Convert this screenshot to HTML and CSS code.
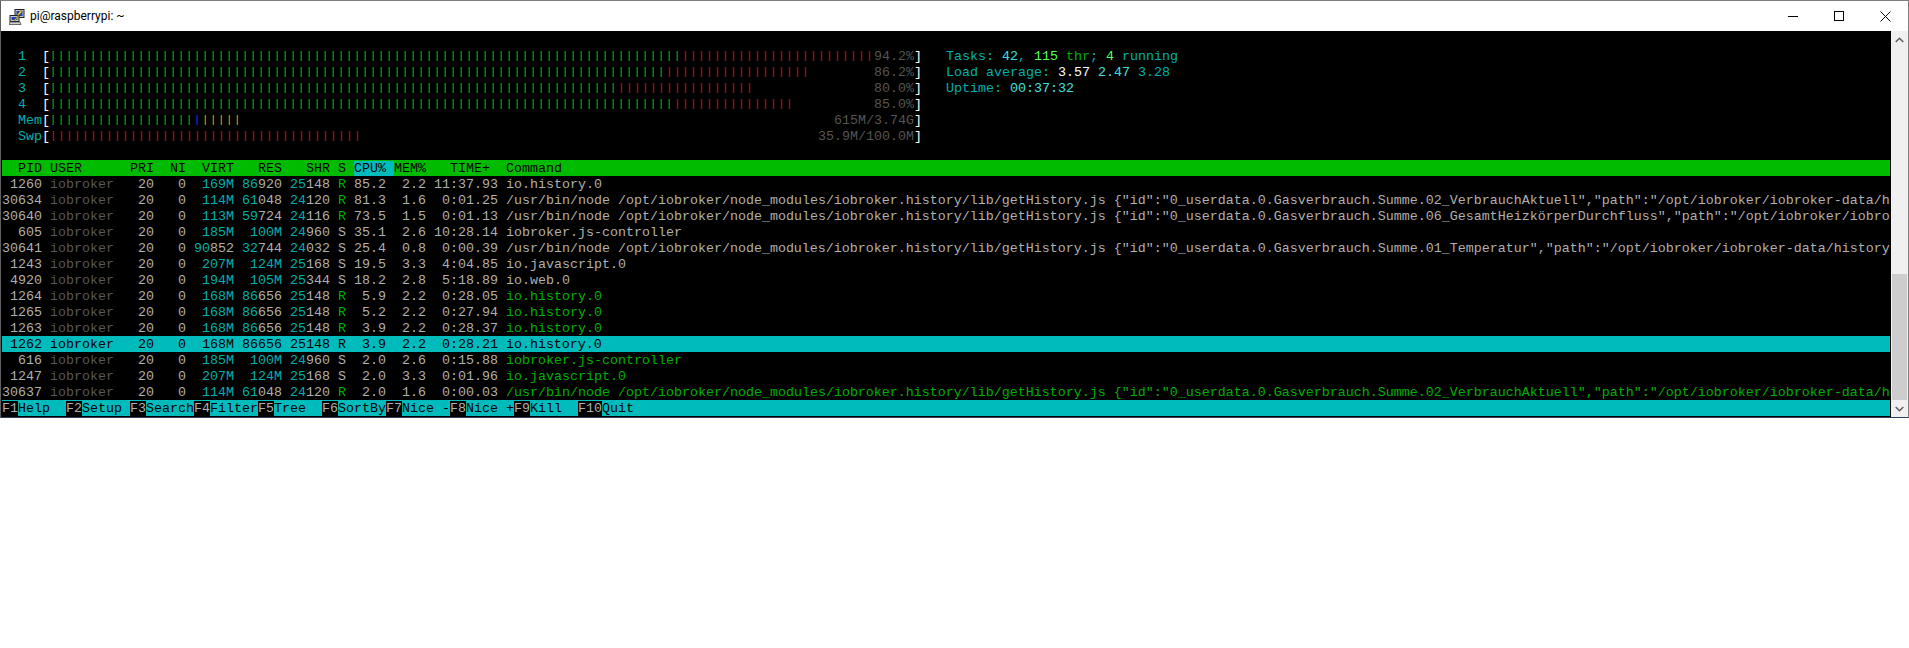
FILE: index.html
```html
<!DOCTYPE html>
<html lang="en">
<head>
<meta charset="utf-8">
<title>pi@raspberrypi: ~</title>
<link rel="stylesheet" href="styles.css">
</head>
<body>
<div class="window">
  <header class="titlebar">
    <svg class="app-icon" width="16" height="16" viewBox="0 0 16 16">
      <rect x="6" y="0.5" width="9" height="8" fill="#c8c8d8" stroke="#222"/>
      <rect x="7.5" y="2" width="6" height="5" fill="#2040c0"/>
      <rect x="1" y="6.5" width="9" height="6" fill="#c8c8d8" stroke="#222"/>
      <rect x="2.5" y="8" width="6" height="3" fill="#2040c0"/>
      <path d="M1 13h10l1 2.500H0z" fill="#d0d0d0" stroke="#333" stroke-width="0.700"/>
      <path d="M12 1 8 6l2 .5L5 11l1 .5L10 8 8.500 7.500 13 3z" fill="#f4e020" stroke="#705000" stroke-width="0.500"/>
    </svg>
    <span class="title">pi@raspberrypi: ~</span>
    <div class="controls">
      <div class="ctl"><svg width="10" height="10" viewBox="0 0 10 10"><path d="M0 5.500h10" stroke="#000"/></svg></div>
      <div class="ctl"><svg width="10" height="10" viewBox="0 0 10 10"><rect x="0.500" y="0.500" width="9" height="9" fill="none" stroke="#000"/></svg></div>
      <div class="ctl"><svg width="11" height="11" viewBox="0 0 11 11"><path d="M.5.500l10 10M10.500.500l-10 10" stroke="#000" fill="none"/></svg></div>
    </div>
  </header>
  <div class="content">
    <main class="term">
<div class="row"> </div>
<div class="row"><span class="c">  1  </span><span class="w">[</span><span class="bar g">|||||||||||||||||||||||||||||||||||||||||||||||||||||||||||||||||||||||||||||||</span><span class="bar r">||||||||||||||||||||||||</span><span class="d">94.2%</span><span class="w">]</span>   <span class="c">Tasks: </span><span class="bc">42</span><span class="c">, </span><span class="bg">115</span><span class="g"> thr</span><span class="c">; </span><span class="bg">4</span><span class="c"> running</span></div>
<div class="row"><span class="c">  2  </span><span class="w">[</span><span class="bar g">|||||||||||||||||||||||||||||||||||||||||||||||||||||||||||||||||||||||||||||</span><span class="bar r">||||||||||||||||||</span>        <span class="d">86.2%</span><span class="w">]</span>   <span class="c">Load average: </span><span class="w">3.57 </span><span class="bc">2.47 </span><span class="c">3.28</span></div>
<div class="row"><span class="c">  3  </span><span class="w">[</span><span class="bar g">|||||||||||||||||||||||||||||||||||||||||||||||||||||||||||||||||||||||</span><span class="bar r">|||||||||||||||||</span>               <span class="d">80.0%</span><span class="w">]</span>   <span class="c">Uptime: </span><span class="bc">00:37:32</span></div>
<div class="row"><span class="c">  4  </span><span class="w">[</span><span class="bar g">||||||||||||||||||||||||||||||||||||||||||||||||||||||||||||||||||||||||||||||</span><span class="bar r">|||||||||||||||</span>          <span class="d">85.0%</span><span class="w">]</span></div>
<div class="row"><span class="c">  Mem</span><span class="w">[</span><span class="bar g">||||||||||||||||||</span><span class="bar b">|</span><span class="bar y">|||||</span>                                                                          <span class="d">615M/3.74G</span><span class="w">]</span></div>
<div class="row"><span class="c">  Swp</span><span class="w">[</span><span class="bar r">|||||||||||||||||||||||||||||||||||||||</span>                                                         <span class="d">35.9M/100.0M</span><span class="w">]</span></div>
<div class="row"> </div>
<div class="row head">  PID USER      PRI  NI  VIRT   RES   SHR S <span class="sort">CPU% </span>MEM%   TIME+  Command</div>
<div class="row n"> 1260 <span class="d">iobroker</span>   20   0  <span class="c">169M</span> <span class="c">86</span>920 <span class="c">25</span>148 <span class="g">R</span> 85.2  2.2 11:37.93 io.history.0</div>
<div class="row n">30634 <span class="d">iobroker</span>   20   0  <span class="c">114M</span> <span class="c">61</span>048 <span class="c">24</span>120 <span class="g">R</span> 81.3  1.6  0:01.25 /usr/bin/node /opt/iobroker/node_modules/iobroker.history/lib/getHistory.js {"id":"0_userdata.0.Gasverbrauch.Summe.02_VerbrauchAktuell","path":"/opt/iobroker/iobroker-data/h</div>
<div class="row n">30640 <span class="d">iobroker</span>   20   0  <span class="c">113M</span> <span class="c">59</span>724 <span class="c">24</span>116 <span class="g">R</span> 73.5  1.5  0:01.13 /usr/bin/node /opt/iobroker/node_modules/iobroker.history/lib/getHistory.js {"id":"0_userdata.0.Gasverbrauch.Summe.06_GesamtHeizkörperDurchfluss","path":"/opt/iobroker/iobro</div>
<div class="row n">  605 <span class="d">iobroker</span>   20   0  <span class="c">185M</span>  <span class="c">100M</span> <span class="c">24</span>960 S 35.1  2.6 10:28.14 iobroker.js-controller</div>
<div class="row n">30641 <span class="d">iobroker</span>   20   0 <span class="c">90</span>852 <span class="c">32</span>744 <span class="c">24</span>032 S 25.4  0.8  0:00.39 /usr/bin/node /opt/iobroker/node_modules/iobroker.history/lib/getHistory.js {"id":"0_userdata.0.Gasverbrauch.Summe.01_Temperatur","path":"/opt/iobroker/iobroker-data/history</div>
<div class="row n"> 1243 <span class="d">iobroker</span>   20   0  <span class="c">207M</span>  <span class="c">124M</span> <span class="c">25</span>168 S 19.5  3.3  4:04.85 io.javascript.0</div>
<div class="row n"> 4920 <span class="d">iobroker</span>   20   0  <span class="c">194M</span>  <span class="c">105M</span> <span class="c">25</span>344 S 18.2  2.8  5:18.89 io.web.0</div>
<div class="row n"> 1264 <span class="d">iobroker</span>   20   0  <span class="c">168M</span> <span class="c">86</span>656 <span class="c">25</span>148 <span class="g">R</span>  5.9  2.2  0:28.05 <span class="g">io.history.0</span></div>
<div class="row n"> 1265 <span class="d">iobroker</span>   20   0  <span class="c">168M</span> <span class="c">86</span>656 <span class="c">25</span>148 <span class="g">R</span>  5.2  2.2  0:27.94 <span class="g">io.history.0</span></div>
<div class="row n"> 1263 <span class="d">iobroker</span>   20   0  <span class="c">168M</span> <span class="c">86</span>656 <span class="c">25</span>148 <span class="g">R</span>  3.9  2.2  0:28.37 <span class="g">io.history.0</span></div>
<div class="row sel"> 1262 iobroker   20   0  168M 86656 25148 R  3.9  2.2  0:28.21 io.history.0</div>
<div class="row n">  616 <span class="d">iobroker</span>   20   0  <span class="c">185M</span>  <span class="c">100M</span> <span class="c">24</span>960 S  2.0  2.6  0:15.88 <span class="g">iobroker.js-controller</span></div>
<div class="row n"> 1247 <span class="d">iobroker</span>   20   0  <span class="c">207M</span>  <span class="c">124M</span> <span class="c">25</span>168 S  2.0  3.3  0:01.96 <span class="g">io.javascript.0</span></div>
<div class="row n">30637 <span class="d">iobroker</span>   20   0  <span class="c">114M</span> <span class="c">61</span>048 <span class="c">24</span>120 <span class="g">R</span>  2.0  1.6  0:00.03 <span class="g">/usr/bin/node /opt/iobroker/node_modules/iobroker.history/lib/getHistory.js {"id":"0_userdata.0.Gasverbrauch.Summe.02_VerbrauchAktuell","path":"/opt/iobroker/iobroker-data/h</span></div>
<div class="row foot"><span class="k">F1</span><span class="l">Help  </span><span class="k">F2</span><span class="l">Setup </span><span class="k">F3</span><span class="l">Search</span><span class="k">F4</span><span class="l">Filter</span><span class="k">F5</span><span class="l">Tree  </span><span class="k">F6</span><span class="l">SortBy</span><span class="k">F7</span><span class="l">Nice -</span><span class="k">F8</span><span class="l">Nice +</span><span class="k">F9</span><span class="l">Kill  </span><span class="k">F10</span><span class="l">Quit</span></div>
    </main>
    <aside class="scrollbar">
      <div class="arrow"><svg width="9" height="6" viewBox="0 0 9 6"><path d="M.7 5 4.500 1.300 8.300 5" fill="none" stroke="#606060" stroke-width="1.600"/></svg></div>
      <div class="thumb"></div>
      <div class="arrow"><svg width="9" height="6" viewBox="0 0 9 6"><path d="M.7 1 4.500 4.700 8.300 1" fill="none" stroke="#606060" stroke-width="1.600"/></svg></div>
    </aside>
  </div>
</div>
</body>
</html>
```

FILE: styles.css
```css
html, body {
  margin: 0;
  padding: 0;
  background: #fff;
}

.window {
  width: 1909px;
  box-sizing: border-box;
  border-top: 1px solid #7f7f7f;
  border-left: 1px solid #5f5f5f;
  border-right: 1px solid #7f7f7f;
  border-bottom: 1px solid #24435f;
}

.titlebar {
  height: 30px;
  display: flex;
  align-items: center;
  padding-left: 8px;
  background: #fff;
  font: 12px Roboto, "Noto Sans", sans-serif;
  color: #000;
}

.app-icon {
  flex: none;
  margin-top: 1px;
}

.title {
  margin-left: 5px;
}

.controls {
  margin-left: auto;
  display: flex;
}

.ctl {
  width: 46px;
  height: 30px;
  display: flex;
  align-items: center;
  justify-content: center;
}

.content {
  display: flex;
  height: 386px;
}

.term {
  flex: 1;
  min-width: 0;
  background: #000;
  padding: 1px;
  overflow: hidden;
  font-family: "Liberation Mono", monospace;
  font-size: 13.333px;
  line-height: 18px;
  color: #b0b0b0;
}

.row {
  height: 16px;
  white-space: pre;
  overflow: hidden;
}

.c { color: #00b0b0; }
.g { color: #00b000; }
.r { color: #bb0000; }
.b { color: #0000bb; }
.y { color: #bbbb00; }
.d { color: #555; }
.w { color: #fff; }
.bc { color: #40e0e0; }
.bg { color: #55ff55; }

.bar {
  font-size: 10.5px;
  line-height: 1;
  letter-spacing: 1.699px;
  vertical-align: 1px;
}

.bar.g { color: #00d000; }
.bar.r { color: #f00000; }
.bar.y { color: #f0b000; }
.bar.b { color: #3030ff; }

.head {
  background: #00bb00;
  color: #000;
}

.sort {
  background: #00bbbb;
}

.sel {
  background: #00bbbb;
  color: #000;
}

.foot {
  background: #00bbbb;
}

.k {
  background: #000;
  color: #b0b0b0;
}

.l {
  color: #000;
}

.scrollbar {
  flex: none;
  width: 17px;
  background: #f0f0f0;
  display: flex;
  flex-direction: column;
}

.arrow {
  height: 17px;
  flex: none;
  display: flex;
  align-items: center;
  justify-content: center;
}

.thumb {
  height: 126px;
  margin: 226px 1px 0 1px;
  background: #cdcdcd;
}
```
